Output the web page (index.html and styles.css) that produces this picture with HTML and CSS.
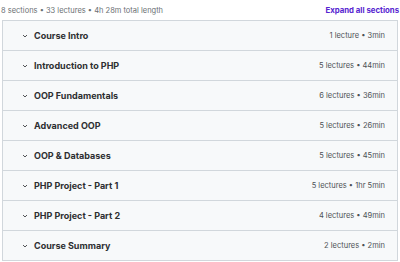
FILE: index.html
```html
<!DOCTYPE html>
<html lang="en">
<head>
    <meta charset="UTF-8">
    <meta name="viewport" content="width=device-width, initial-scale=1.0">
    <title>Course content</title>
    <link rel="stylesheet" href="styles.css">
</head>
<body>
    <div class="curriculum">
        <div class="summary">
            <span class="stats">8 sections • 33 lectures • 4h 28m total length</span>
            <button class="expand">Expand all sections</button>
        </div>

        <div class="sections">
            <div class="section">
                <span class="chevron"><svg width="8" height="8" viewBox="0 0 8 8"><path d="M2 3 L4 5 L6 3" fill="none" stroke="#3e4143" stroke-width="0.9"/></svg></span>
                <span class="title">Course Intro</span>
                <span class="meta">1 lecture • 3min</span>
            </div>
            <div class="section">
                <span class="chevron"><svg width="8" height="8" viewBox="0 0 8 8"><path d="M2 3 L4 5 L6 3" fill="none" stroke="#3e4143" stroke-width="0.9"/></svg></span>
                <span class="title">Introduction to PHP</span>
                <span class="meta">5 lectures • 44min</span>
            </div>
            <div class="section">
                <span class="chevron"><svg width="8" height="8" viewBox="0 0 8 8"><path d="M2 3 L4 5 L6 3" fill="none" stroke="#3e4143" stroke-width="0.9"/></svg></span>
                <span class="title">OOP Fundamentals</span>
                <span class="meta">6 lectures • 36min</span>
            </div>
            <div class="section">
                <span class="chevron"><svg width="8" height="8" viewBox="0 0 8 8"><path d="M2 3 L4 5 L6 3" fill="none" stroke="#3e4143" stroke-width="0.9"/></svg></span>
                <span class="title">Advanced OOP</span>
                <span class="meta">5 lectures • 26min</span>
            </div>
            <div class="section">
                <span class="chevron"><svg width="8" height="8" viewBox="0 0 8 8"><path d="M2 3 L4 5 L6 3" fill="none" stroke="#3e4143" stroke-width="0.9"/></svg></span>
                <span class="title">OOP &amp; Databases</span>
                <span class="meta">5 lectures • 45min</span>
            </div>
            <div class="section">
                <span class="chevron"><svg width="8" height="8" viewBox="0 0 8 8"><path d="M2 3 L4 5 L6 3" fill="none" stroke="#3e4143" stroke-width="0.9"/></svg></span>
                <span class="title">PHP Project - Part 1</span>
                <span class="meta">5 lectures • 1hr 5min</span>
            </div>
            <div class="section">
                <span class="chevron"><svg width="8" height="8" viewBox="0 0 8 8"><path d="M2 3 L4 5 L6 3" fill="none" stroke="#3e4143" stroke-width="0.9"/></svg></span>
                <span class="title">PHP Project - Part 2</span>
                <span class="meta">4 lectures • 49min</span>
            </div>
            <div class="section">
                <span class="chevron"><svg width="8" height="8" viewBox="0 0 8 8"><path d="M2 3 L4 5 L6 3" fill="none" stroke="#3e4143" stroke-width="0.9"/></svg></span>
                <span class="title">Course Summary</span>
                <span class="meta">2 lectures • 2min</span>
            </div>
        </div>
    </div>
</body>
</html>
```

FILE: styles.css
```css
body {
    margin: 0;
    padding: 0 2px 0 2px;
    font-family: Inter, "Liberation Sans", sans-serif;
    color: #2d2f31;
    background-color: #ffffff;
}
.summary {
    display: flex;
    justify-content: space-between;
    align-items: center;
    height: 20px;
    font-size: 7.5px;
}
.stats {
    color: #6a6f73;
    margin-left: -1px;
}
.expand {
    background: none;
    border: none;
    padding: 0;
    margin-right: -1px;
    font-family: inherit;
    font-size: 7.8px;
    font-weight: 700;
    color: #5624d0;
    cursor: pointer;
}
.sections {
    border: 1px solid #d1d7dc;
    border-bottom: none;
}
.section {
    display: flex;
    align-items: center;
    height: 29px;
    padding: 0 12px 0 18px;
    background-color: #f7f9fa;
    border-bottom: 1px solid #d1d7dc;
}
.chevron {
    display: flex;
    width: 8px;
    margin-right: 5px;
}
.title {
    flex: 1;
    font-size: 9px;
    font-weight: 700;
}
.meta {
    font-size: 7.5px;
    color: #4d5155;
}
```
